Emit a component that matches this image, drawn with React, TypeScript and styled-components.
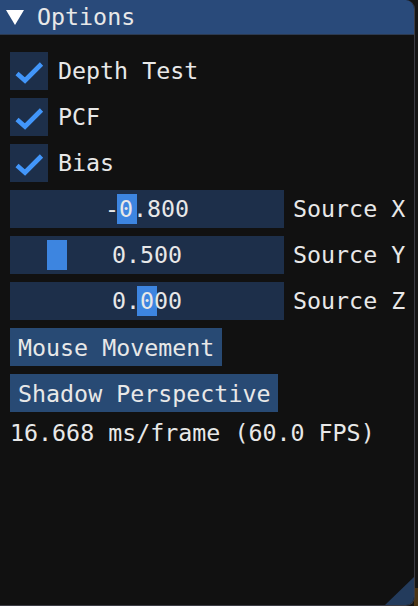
import React from "react";
import styled, { createGlobalStyle } from "styled-components";

const Global = createGlobalStyle`
  html, body { margin: 0; padding: 0; background: #151515; }
  body { width: 418px; height: 606px; overflow: hidden; position: relative; }
  #root { height: 606px; }
`;

const FONT = `"DejaVu Sans Mono", "Liberation Mono", monospace`;

const Page = styled.div`
  position: relative;
  width: 418px;
  height: 606px;
  background: #151515;
  overflow: hidden;
`;

const Corner = styled.div`
  position: absolute;
  right: 0;
  bottom: 0;
  width: 4px;
  height: 18px;
  background: #4a3414;
`;

const Window = styled.div`
  position: relative;
  width: 414px;
  height: 605px;
  background: #111111;
  border-right: 1px solid #3c3c44;
  border-bottom: 1px solid #3c3c44;
  border-radius: 0 9px 9px 0;
  display: flex;
  flex-direction: column;
  overflow: hidden;
  font-family: ${FONT};
  font-size: 23.3px;
  color: #e8e8e8;
`;

const TitleBar = styled.div`
  height: 35px;
  flex: none;
  background: #294a7a;
  display: flex;
  align-items: center;
  padding-left: 6px;
  border-bottom: 1px solid #2c3a50;
  box-sizing: border-box;
`;

const TitleText = styled.span`
  margin-left: 13px;
  line-height: 26px;
`;

const Content = styled.div`
  display: flex;
  flex-direction: column;
  align-items: flex-start;
  gap: 8px;
  padding: 17px 10px 0 10px;
`;

const Row = styled.div`
  display: flex;
  align-items: center;
  height: 38px;
`;

const Box = styled.div`
  width: 38px;
  height: 38px;
  background: #1d2f4a;
  flex: none;
  display: flex;
`;

const Label = styled.span<{ $gap: number }>`
  margin-left: ${(p) => p.$gap}px;
  line-height: 26px;
  white-space: pre;
`;

const Slider = styled.div`
  position: relative;
  width: 274px;
  height: 38px;
  background: #1d2f4a;
  display: flex;
  align-items: center;
  justify-content: center;
  flex: none;
`;

const Grab = styled.div<{ $left: number }>`
  position: absolute;
  top: 4px;
  left: ${(p) => p.$left}px;
  width: 20px;
  height: 30px;
  background: #3d85e0;
`;

const SliderValue = styled.span`
  position: relative;
  line-height: 26px;
  white-space: pre;
`;

const Button = styled.div`
  height: 38px;
  padding: 0 8px;
  background: #284a74;
  display: flex;
  align-items: center;
  white-space: pre;
`;

const Info = styled.div`
  height: 26px;
  line-height: 26px;
  white-space: pre;
`;

const Grip = styled.div`
  position: absolute;
  right: 0;
  bottom: 0;
  width: 29px;
  height: 28px;
  background: #233b5c;
  clip-path: polygon(100% 0, 100% 100%, 0 100%);
`;

const Check = () => (
  <svg width="38" height="38" viewBox="0 0 38 38">
    <polyline
      points="7,21.5 15,28.5 31.5,12"
      fill="none"
      stroke="#4296fa"
      strokeWidth="4.6"
      strokeLinejoin="miter"
      strokeLinecap="butt"
    />
  </svg>
);

const Triangle = () => (
  <svg width="18" height="16" viewBox="0 0 18 16">
    <polygon points="0,1 18,1 9,16" fill="#ffffff" />
  </svg>
);

const checks = ["Depth Test", "PCF", "Bias"];
const sliders = [
  { value: "-0.800", label: "Source X", grab: 107 },
  { value: "0.500", label: "Source Y", grab: 37 },
  { value: "0.000", label: "Source Z", grab: 127 },
];

export default function App() {
  return (
    <Page>
      <Global />
      <Corner />
      <Window>
        <TitleBar>
          <Triangle />
          <TitleText>Options</TitleText>
        </TitleBar>
        <Content>
          {checks.map((c) => (
            <Row key={c}>
              <Box>
                <Check />
              </Box>
              <Label $gap={10}>{c}</Label>
            </Row>
          ))}
          {sliders.map((s) => (
            <Row key={s.label}>
              <Slider>
                <Grab $left={s.grab} />
                <SliderValue>{s.value}</SliderValue>
              </Slider>
              <Label $gap={9}>{s.label}</Label>
            </Row>
          ))}
          <Button>Mouse Movement</Button>
          <Button>Shadow Perspective</Button>
          <Info>16.668 ms/frame (60.0 FPS)</Info>
        </Content>
        <Grip />
      </Window>
    </Page>
  );
}
